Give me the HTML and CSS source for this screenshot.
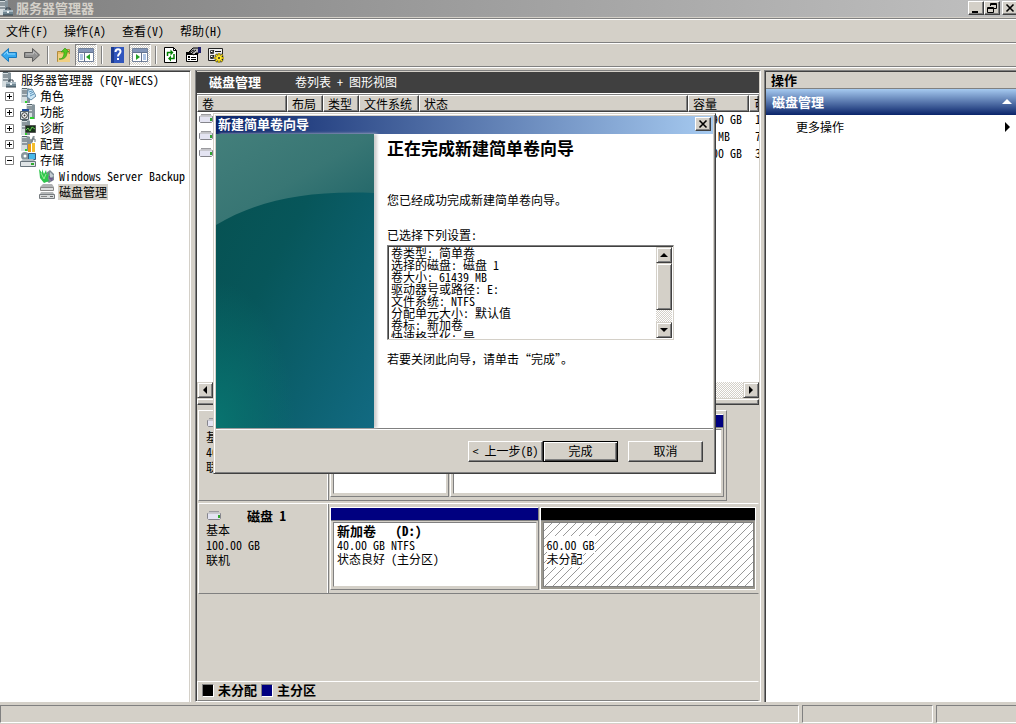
FILE: index.html
```html
<!DOCTYPE html>
<html lang="zh-CN">
<head>
<meta charset="utf-8">
<title>服务器管理器</title>
<link rel="stylesheet" href="styles.css">
</head>
<body>
<svg class="defs" aria-hidden="true">
  <symbol id="server" viewBox="0 0 16 16">
    <path d="M1 1l2-1h6l1 1v14H1z" fill="#a9b4ba"/><path d="M1 1h6v14H1z" fill="#d5dde0"/><path d="M7 1h3v14H7z" fill="#84939b"/>
    <path d="M2 3h5M2 5h5M2 8h5" stroke="#46555e"/><path d="M2 0h5v1H2z" fill="#53636b"/><path d="M5 13h2v2H5z" fill="#2fd12f"/>
  </symbol>
  <symbol id="toolbox" viewBox="0 0 16 16">
    <use href="#server" width="16" height="16"/><path d="M8 10V8h4v2" fill="none" stroke="#34434f"/><path d="M5 10h10v5H5z" fill="#718793"/><path d="M5 10h10v2H5z" fill="#a9bac4"/><path d="M9 11h2v2H9z" fill="#eef4f7"/><path d="M5 15h10" stroke="#33414a"/>
  </symbol>
  <symbol id="drive" viewBox="0 0 16 10">
    <path d="M3 1h10l2 2H1z" fill="#c4c4c8"/><path d="M3 .5h10" stroke="#9a9a9e"/><path d="M1.500 2.500h13v5l-1 1h-11l-1-1z" fill="#e4e4f2" stroke="#85858c"/><path d="M2 2.500h12" stroke="#c9c9cf"/><path d="M12 4h2v3h-2z" fill="#2fa62f"/>
  </symbol>
</svg>
<div class="app">
  <header class="titlebar">
    <svg class="i16 title-icon"><use href="#toolbox"/></svg>
    <h1 class="window-title">服务器管理器</h1>
    <div class="window-buttons">
      <button class="caption" aria-label="最小化"><svg class="i10" viewBox="0 0 10 10"><path d="M1 8h6v2H1z"/></svg></button>
      <button class="caption" aria-label="还原"><svg class="i10" viewBox="0 0 10 10"><path fill="none" stroke="#000" d="M3.500 3V.5h6v5H7M3 1.500h7M.5 4.500h6v5h-6zM0 5.500h7"/></svg></button>
      <button class="caption caption-close" aria-label="关闭"><svg class="i10" viewBox="0 0 10 10"><path fill="none" stroke="#000" stroke-width="1.600" d="M1.500 1.500l7 7M8.500 1.500l-7 7"/></svg></button>
    </div>
  </header>
  <nav class="menubar">
    <button class="menu">文件(F)</button><button class="menu">操作(A)</button><button class="menu">查看(V)</button><button class="menu">帮助(H)</button>
  </nav>
  <div class="toolbar">
    <button class="tool" aria-label="后退"><svg class="i16" viewBox="0 0 16 16"><path d="M.5 8l7-6.500v4h8v5h-8v4z" fill="#35a8ef" stroke="#1979bd"/><path d="M3 7.500l3.500-3V7H14" fill="none" stroke="#91d8ff"/></svg></button>
    <button class="tool" aria-label="前进"><svg class="i16" viewBox="0 0 16 16"><path d="M15.500 8l-7-6.500v4h-8v5h8v4z" fill="#929292" stroke="#5e5e5e"/><path d="M2 7h7.500V4.500l3.500 3" fill="none" stroke="#bdbdbd"/></svg></button>
    <span class="sep"></span>
    <button class="tool" aria-label="向上"><svg class="i16" viewBox="0 0 16 16"><path d="M1.500 4.500h6l1-2h5v12h-12z" fill="#e8bd61" stroke="#b18a3c"/><path d="M2 7h12v8H2z" fill="#f0cf82"/><path d="M3 12c4 0 5-3 5-7H5l4-4 4 4h-2c0 5-3 8-8 7z" fill="#54c71e" stroke="#2d8d10" stroke-width=".6"/></svg></button>
    <button class="tool pressed" aria-label="控制台树"><svg class="i16" viewBox="0 0 16 16"><path d="M.5 1.500h15v13H.5z" fill="#fff" stroke="#73829c"/><path d="M1 2h14v3H1z" fill="#8295b7"/><path d="M1 5.500h14M6.500 6v9" stroke="#65738f"/><path d="M2 8h3M2 10h3M2 12h3" stroke="#628ccb"/><path d="M12 7v6L8 10z" fill="#25a125"/></svg></button>
    <span class="sep"></span>
    <button class="tool" aria-label="帮助"><svg class="i16" viewBox="0 0 16 16"><path d="M1 0h13v16H1z" fill="#3156bd"/><path d="M1 0h3v16H1z" fill="#1d3c91"/><path d="M5.500 5c0-4 5-3.500 5-.5 0 2.500-2.500 2-2.500 5" fill="none" stroke="#fff" stroke-width="2"/><path d="M7 11h2v2H7z" fill="#fff"/></svg></button>
    <button class="tool pressed" aria-label="操作窗格"><svg class="i16" viewBox="0 0 16 16"><path d="M.5 1.500h15v13H.5z" fill="#fff" stroke="#73829c"/><path d="M1 2h14v3H1z" fill="#8295b7"/><path d="M1 5.500h14M9.500 6v9" stroke="#65738f"/><path d="M11 8h3M11 10h3M11 12h3" stroke="#628ccb"/><path d="M4 7v6l4-3z" fill="#25a125"/></svg></button>
    <span class="sep"></span>
    <button class="tool" aria-label="刷新"><svg class="i16" viewBox="0 0 16 16"><path d="M.5.5h9l3 3v12H.5z" fill="#fff" stroke="#000"/><path d="M9.500.5v3h3" fill="none" stroke="#000"/><path d="M3.500 9V5.500H7M10 7v4.500H6.500" fill="none" stroke="#008000" stroke-width="1.500"/><path d="M6.500 2.500v6l3-3zM7 8.500v6l-3-3z" fill="#008000"/></svg></button>
    <button class="tool" aria-label="属性"><svg class="i16" viewBox="0 0 16 16"><path d="M.5 5.500h11v9H.5z" fill="#fff" stroke="#000"/><path d="M0 5h12v3H0zM2 9h2v2H2zM2 12h2v1H2zM5 10h5v1H5zM5 12h5v1H5z"/><path d="M3 5l4-4h6v5h-3L8 8z" fill="#b8b8b8" stroke="#000"/><path d="M4 5l4-2M6 6l4-3" stroke="#000"/><path d="M12 0h3v6h-3z" fill="#20206c"/></svg></button>
    <button class="tool" aria-label="设置"><svg class="i16" viewBox="0 0 16 16"><path d="M.5 1.500h14v12H.5z" fill="#eee" stroke="#222"/><path d="M2.500 3.500h3v3h-3zM2.500 8.500h3v3h-3z" fill="#fff" stroke="#444"/><path d="M7 4.500h6M3 5l1 1 2-3M3 10l1 1 2-3" fill="none" stroke="#111"/><path d="M11 6v10M6 11h10M7.500 7.500l7 7M14.500 7.500l-7 7" stroke="#222" stroke-width="2.500"/><path d="M11 6v10M6 11h10M7.500 7.500l7 7M14.500 7.500l-7 7" stroke="#f7dc18" stroke-width="1.400"/><circle cx="11" cy="11" r="2.800" fill="#ffe52e"/><circle cx="11" cy="11" r="1" fill="#222"/></svg></button>
  </div>

  <main class="workspace">
    <aside class="tree">
      <ul class="tree-list">
        <li class="node root"><svg class="i16"><use href="#toolbox"/></svg><span>服务器管理器 (FQY-WECS)</span></li>
        <li class="node"><button class="expander" aria-label="展开"><svg class="i9" viewBox="0 0 9 9"><path d="M.5.5h8v8h-8z" fill="#fff" stroke="#808080"/><path d="M2 4.500h5M4.500 2v5" stroke="#000"/></svg></button><svg class="i16" viewBox="0 0 16 16"><use href="#server" width="16" height="16"/><path d="M8 2l4-1 4 7-5 4-4-3z" fill="#cde6f5" stroke="#628ba8"/><path d="M9 4l3-1M10 6l3-2M10 8l4-2" stroke="#5693bd"/></svg><span>角色</span></li>
        <li class="node"><button class="expander" aria-label="展开"><svg class="i9" viewBox="0 0 9 9"><path d="M.5.5h8v8h-8z" fill="#fff" stroke="#808080"/><path d="M2 4.500h5M4.500 2v5" stroke="#000"/></svg></button><svg class="i16" viewBox="0 0 16 16"><use href="#server" x="5" width="16" height="16"/><path d="M2 5h7v3H2z" fill="#254f9e"/><path d="M.5 7.500h8v8h-8z" fill="#dfe6e8" stroke="#53616b"/><circle cx="4.500" cy="11.500" r="2.800" fill="#fff" stroke="#333"/><circle cx="4.500" cy="11.500" r="1" fill="#333"/><path d="M12 13h2v2h-2z" fill="#2fd12f"/></svg><span>功能</span></li>
        <li class="node"><button class="expander" aria-label="展开"><svg class="i9" viewBox="0 0 9 9"><path d="M.5.5h8v8h-8z" fill="#fff" stroke="#808080"/><path d="M2 4.500h5M4.500 2v5" stroke="#000"/></svg></button><svg class="i16" viewBox="0 0 16 16"><use href="#server" width="16" height="16"/><path d="M5.500 5.500h10v7h-10z" fill="#18321b" stroke="#555"/><path d="M6 10l2-2 2 3 2-4 3 2" fill="none" stroke="#62c94e"/></svg><span>诊断</span></li>
        <li class="node"><button class="expander" aria-label="展开"><svg class="i9" viewBox="0 0 9 9"><path d="M.5.5h8v8h-8z" fill="#fff" stroke="#808080"/><path d="M2 4.500h5M4.500 2v5" stroke="#000"/></svg></button><svg class="i16" viewBox="0 0 16 16"><use href="#server" width="16" height="16"/><path d="M7 1l3 3v4M14 0l-3 7" fill="none" stroke="#8b969b" stroke-width="2"/><path d="M8 8h3v8H8z" fill="#ec9c12"/><path d="M13.500 7v9" stroke="#f4bd2d" stroke-width="3"/><path d="M12 6V3h3v3" fill="none" stroke="#68747a"/></svg><span>配置</span></li>
        <li class="node"><button class="expander" aria-label="折叠"><svg class="i9" viewBox="0 0 9 9"><path d="M.5.5h8v8h-8z" fill="#fff" stroke="#808080"/><path d="M2 4.500h5" stroke="#000"/></svg></button><svg class="i16" viewBox="0 0 16 16"><circle cx="5" cy="4" r="4" fill="#89969e"/><circle cx="5" cy="4" r="1.500" fill="#fff"/><path d="M8.500 1.500h7v6h-7z" fill="#4ab9e8" stroke="#375d82"/><path d="M1 9l2-2h10l2 2z" fill="#b3bdc2"/><path d="M.5 9.500h15v5H.5z" fill="#dfe4e6" stroke="#68747c"/><path d="M11 11h3v2h-3z" fill="#2fad2f"/></svg><span>存储</span></li>
        <li class="node leaf"><svg class="i16" viewBox="0 0 16 16"><path d="M7 5l4-3 4 4v6l-5 3-5-4z" fill="#7e8992"/><path d="M11 4l4 4-4 2z" fill="#c2cbd1"/><path d="M0 1l3 4V1l2 5 2-4 1 5 2-3-1 7 1 2-5 2-4-5z" fill="#2fc64c"/><path d="M2 5l3 6 2-5" fill="none" stroke="#96ed96"/><path d="M10 8l3 5M10 10l4 1" stroke="#6c4f8d"/></svg><span>Windows Server Backup</span></li>
        <li class="node leaf"><svg class="i16" viewBox="0 0 16 16"><path d="M4 0h9l2 3-1 3H3L1 3z" fill="#b0b2b3"/><path d="M1.500 3.500h13v3h-13z" fill="#dedfdf" stroke="#888"/><path d="M2 8h12l1 2H1z" fill="#b4b7b8"/><path d="M.5 10.500h15v4H.5z" fill="#d9dcdd" stroke="#777c80"/><path d="M2 12.500h6" stroke="#888"/><path d="M11 12h3v1h-3z" fill="#686868"/></svg><span class="selected">磁盘管理</span></li>
      </ul>
    </aside>

    <section class="center">
      <div class="view-header"><h2 class="strong">磁盘管理</h2><span>卷列表 + 图形视图</span></div>
      <div class="volume-list">
        <table class="volumes">
          <colgroup><col class="c-name"><col class="c-short"><col class="c-short"><col class="c-fs"><col><col class="c-size"><col class="c-free"></colgroup>
          <thead><tr><th>卷</th><th>布局</th><th>类型</th><th>文件系统</th><th>状态</th><th>容量</th><th>可</th></tr></thead>
          <tbody>
            <tr><td class="drive-cell"><svg class="drive"><use href="#drive"/></svg></td><td></td><td></td><td></td><td></td><td>39.90 GB</td><td>1</td></tr>
            <tr><td class="drive-cell"><svg class="drive"><use href="#drive"/></svg></td><td></td><td></td><td></td><td></td><td>100 MB</td><td>7</td></tr>
            <tr><td class="drive-cell"><svg class="drive"><use href="#drive"/></svg></td><td></td><td></td><td></td><td></td><td>40.00 GB</td><td>3</td></tr>
          </tbody>
        </table>
      </div>
      <div class="hscroll"><button class="scroll-btn" aria-label="向左滚动"><svg class="i8" viewBox="0 0 8 8"><path d="M6 0v8L2 4z"/></svg></button><button class="scroll-btn" aria-label="向右滚动"><svg class="i8" viewBox="0 0 8 8"><path d="M2 0v8l4-4z"/></svg></button></div>
      <div class="splitter"></div>
      <div class="disks">
        <article class="disk disk-short">
          <div class="disk-label"><svg class="drive"><use href="#drive"/></svg><h3 class="strong">磁盘 0</h3><p class="disk-info">基本<br>40.00 GB<br>联机</p></div>
          <div class="regions">
            <div class="region region-small"><div class="bar primary"></div><div class="region-body"></div></div>
            <div class="region"><div class="bar primary"></div><div class="region-body"></div></div>
          </div>
        </article>
        <article class="disk">
          <div class="disk-label"><svg class="drive"><use href="#drive"/></svg><h3 class="strong">磁盘 1</h3><p class="disk-info">基本<br>100.00 GB<br>联机</p></div>
          <div class="regions">
            <div class="region region-left"><div class="bar primary"></div><div class="region-body"><h4 class="strong pre">新加卷   (D:)</h4><p>40.00 GB NTFS</p><p>状态良好 (主分区)</p></div></div>
            <div class="region region-free"><div class="bar free"></div><div class="region-body hatch"><p><span class="plate">60.00 GB</span></p><p><span class="plate">未分配</span></p></div></div>
          </div>
        </article>
      </div>
      <div class="legend"><span class="swatch free"></span><span class="strong">未分配</span><span class="swatch primary"></span><span class="strong">主分区</span></div>

      <div class="dialog" role="dialog" aria-labelledby="dlg-title">
        <div class="dialog-title"><h2 class="strong" id="dlg-title">新建简单卷向导</h2><button class="caption" aria-label="关闭"><svg class="i10" viewBox="0 0 10 10"><path fill="none" stroke="#000" stroke-width="1.600" d="M1.500 1.500l7 7M8.500 1.500l-7 7"/></svg></button></div>
        <div class="dialog-body">
          <svg class="banner" viewBox="0 0 158 294" preserveAspectRatio="none" aria-hidden="true">
            <defs>
              <linearGradient id="base" x1="0" y1="0" x2="1" y2="1"><stop offset="0" stop-color="#06504f"/><stop offset=".4" stop-color="#07565a"/><stop offset=".7" stop-color="#0c606e"/><stop offset="1" stop-color="#126a82"/></linearGradient>
              <linearGradient id="gloss" x1="0" y1="0" x2="1" y2="1"><stop offset="0" stop-color="#437f7b"/><stop offset=".5" stop-color="#387674"/><stop offset="1" stop-color="#1c6266"/></linearGradient>
              <radialGradient id="glow" cx="0" cy="1" r=".5"><stop offset="0" stop-color="#08746f"/><stop offset="1" stop-color="#08746f" stop-opacity="0"/></radialGradient>
            </defs>
            <path d="M0 0h158v294H0z" fill="url(#base)"/><path d="M0 0h158v294H0z" fill="url(#glow)"/><path d="M0 0h158v59C90 56 40 67 0 91z" fill="url(#gloss)"/>
          </svg>
          <div class="dialog-content">
            <h2 class="headline">正在完成新建简单卷向导</h2>
            <p class="done">您已经成功完成新建简单卷向导。</p>
            <label for="settings">已选择下列设置:</label>
            <div class="listbox">
              <textarea id="settings" class="settings" readonly>卷类型: 简单卷
选择的磁盘: 磁盘 1
卷大小: 61439 MB
驱动器号或路径: E:
文件系统: NTFS
分配单元大小: 默认值
卷标: 新加卷
快速格式化: 是</textarea>
              <div class="vscroll"><button class="scroll-btn" aria-label="向上滚动"><svg class="i8" viewBox="0 0 8 8"><path d="M0 6h8L4 2z"/></svg></button><div class="thumb"></div><button class="scroll-btn" aria-label="向下滚动"><svg class="i8" viewBox="0 0 8 8"><path d="M0 2h8L4 6z"/></svg></button></div>
            </div>
            <p class="hint">若要关闭此向导，请单击“完成”。</p>
          </div>
        </div>
        <div class="dialog-footer"><button class="btn">&lt; 上一步(B)</button><button class="btn default">完成</button><button class="btn cancel">取消</button></div>
      </div>
    </section>

    <aside class="actions">
      <h2 class="strong actions-head">操作</h2>
      <button class="strong actions-group"><span>磁盘管理</span><svg class="i10" viewBox="0 0 10 10"><path d="M0 7h10L5 2z" fill="#fff"/></svg></button>
      <button class="more"><span>更多操作</span><svg class="i10" viewBox="0 0 10 10"><path d="M3 0v10l5-5z"/></svg></button>
    </aside>
  </main>
  <footer class="statusbar"><span class="status"></span><span class="status status-mid"></span><span class="status status-end"></span></footer>
</div>
</body>
</html>
```
FILE: styles.css
```css
* { box-sizing: border-box; }
body {
  margin: 0;
  background: #d4d0c8;
  color: #000;
  font: 12px/16px "Noto Sans CJK SC", "Liberation Sans", sans-serif;
  font-feature-settings: "hwid";
}
h1, h2, h3, h4, p, ul { margin: 0; padding: 0; font-size: 12px; font-weight: normal; }
button, textarea {
  margin: 0; padding: 0; border: 0; border-radius: 0; background: none; color: inherit;
  font: inherit; font-feature-settings: inherit; text-align: left;
}
svg { display: block; flex: none; }
.defs { position: absolute; width: 0; height: 0; }
.strong { font-size: 13px; font-weight: bold; }
.pre { white-space: pre; }
.i16 { width: 16px; height: 16px; }
.i10 { width: 10px; height: 10px; }
.i9 { width: 9px; height: 9px; }
.i8 { width: 8px; height: 8px; }
.drive { width: 16px; height: 10px; }

.app { display: flex; flex-direction: column; height: 100vh; overflow: hidden; }
.titlebar { display: flex; height: 18px; flex: none; border-bottom: 1px solid #d4d0c8; background: linear-gradient(90deg, #808080, #c0c0c0); }
.title-icon { margin-left: -2px; }
.window-title { flex: 1; padding-left: 2px; color: #d4d0c8; font-size: 13px; font-weight: bold; }
.window-buttons { display: flex; padding-top: 1px; }
.caption { display: flex; align-items: center; justify-content: center; width: 16px; height: 14px; background: #d4d0c8; border: 1px solid; border-color: #fff #404040 #404040 #fff; box-shadow: inset -1px -1px #808080; }
.caption-close { margin-left: 2px; margin-right: -2px; }
.menubar, .toolbar { display: flex; align-items: center; flex: none; height: 24px; border-top: 1px solid #808080; box-shadow: inset 0 1px #fff; }
.menubar { gap: 16px; padding-left: 6px; }
.tool { display: flex; align-items: center; justify-content: center; width: 22px; height: 22px; }
.tool:first-child { width: 21px; padding-right: 3px; }
.pressed { border: 1px solid; border-color: #808080 #fff #fff #808080; background: repeating-conic-gradient(#fff 0 25%, #d4d0c8 0 50%) 0 0 / 2px 2px; }
.sep { width: 2px; height: 18px; margin: 0 4px; border-left: 1px solid #808080; border-right: 1px solid #fff; }

.workspace { display: flex; flex: 1; min-height: 0; padding: 3px 0; border-top: 1px solid #808080; box-shadow: inset 0 1px #fff; }
.tree { flex: none; width: 191px; margin-right: 4px; padding-right: 2px; background: #fff; border-top: 1px solid #808080; border-right: 1px solid #fff; box-shadow: inset 0 1px #404040, inset -1px 0 #d4d0c8; }
.tree-list { list-style: none; padding-top: 1px; }
.node { display: flex; align-items: center; height: 16px; padding-left: 5px; white-space: nowrap; }
.node > span { padding: 0 1px; margin-left: 3px; }
.root { padding-left: 1px; }
.leaf { padding-left: 39px; }
.expander { width: 9px; height: 9px; margin-right: 6px; }
.selected { background: #d4d0c8; }

.center { position: relative; display: flex; flex-direction: column; flex: 1; min-width: 0; padding: 1px 1px 0 1px; border: 1px solid; border-color: #808080 #fff #fff #808080; box-shadow: inset 1px 0 #404040; }
.view-header { display: flex; align-items: center; gap: 34px; flex: none; height: 22px; padding: 0 0 2px 12px; background: #404040; color: #fff; border-bottom: 1px solid #fff; }
.volume-list { flex: 1; min-height: 0; overflow: hidden; background: #fff; border-top: 1px solid #808080; }
.volumes { width: 100%; table-layout: fixed; border-collapse: separate; border-spacing: 0; line-height: 15px; }
.volumes th, .volumes td { height: 17px; padding: 0 0 0 6px; overflow: hidden; white-space: nowrap; text-align: left; font-weight: normal; }
.volumes td { padding-bottom: 3px; line-height: 14px; }
.volumes th { background: #d4d0c8; border: 1px solid; border-color: #fff #404040 #404040 #fff; box-shadow: inset -1px -1px #808080; padding-left: 4px; }
.volumes .drive-cell { padding-left: 1px; }
.c-name { width: 90px; }
.c-short { width: 36px; }
.c-fs { width: 60px; }
.c-size { width: 61px; }
.c-free { width: 10px; }
.hscroll, .vscroll { display: flex; justify-content: space-between; flex: none; background: repeating-conic-gradient(#fff 0 25%, #d4d0c8 0 50%) 0 0 / 2px 2px; }
.hscroll { height: 16px; }
.scroll-btn { display: flex; align-items: center; justify-content: center; flex: none; width: 16px; height: 16px; }
.scroll-btn, .thumb { background: #d4d0c8; border: 1px solid; border-color: #d4d0c8 #404040 #404040 #d4d0c8; box-shadow: inset 1px 1px #fff, inset -1px -1px #808080; }
.splitter { flex: none; height: 6px; margin-top: 1px; border: 1px solid; border-color: #fff #404040 #404040 #fff; box-shadow: inset -1px -1px #808080; }
.disks { display: flex; flex-direction: column; gap: 2px; flex: none; min-height: 276px; padding-top: 5px; }
.disk { display: flex; min-height: 91px; margin-left: 1px; border: 1px solid; border-color: #fff #d4d0c8 #808080 #fff; }
.disk-short { margin-right: 32px; border-right-color: #808080; }
.disk-label { display: grid; grid-template-columns: 41px 1fr; align-content: start; width: 129px; padding: 4px 0 0 7px; border-right: 1px solid #fff; }
.disk-label .drive { margin-top: 3px; }
.disk-info { grid-column: 1 / 3; line-height: 15px; margin-top: -2px; }
.regions { display: flex; flex: 1; min-width: 0; gap: 1px; padding: 3px 2px 3px 1px; border-left: 1px solid #808080; }
.region { display: flex; flex-direction: column; flex: 1; border: 1px solid; border-color: #fff #808080 #808080 #fff; }
.region-small { flex: none; width: 119px; }
.region-left { flex: 208; }
.region-free { flex: 216; }
.bar { height: 13px; border-bottom: 1px solid #808080; }
.primary { background: #000080; }
.free { background: #000; }
.region-body { flex: 1; margin: 1px 1px 2px 2px; padding: 1px 0 0 3px; background: #fff; border: 1px solid; border-color: #808080 #d4d0c8 #d4d0c8 #808080; line-height: 14px; }
.region-free { border-right-color: #fff; border-bottom-color: #fff; background: #9b988f; }
.hatch { padding-top: 15px; border-color: #808080; background: #fff linear-gradient(135deg, #fff 45%, #999 45% 55%, #fff 55%) 0 0 / 8px 8px; }
.plate { background: #fff; }
.legend { display: flex; align-items: center; gap: 4px; flex: none; height: 20px; padding: 0 0 2px 4px; border: 1px solid; border-color: #fff #d4d0c8 #808080 #fff; }
.swatch { width: 12px; height: 13px; border: 1px solid; border-color: #808080 #fff #fff #808080; }

.dialog { position: absolute; left: 17px; top: 42px; z-index: 1; width: 503px; padding: 2px; background: #d4d0c8; border: 1px solid; border-color: #d4d0c8 #404040 #404040 #d4d0c8; box-shadow: inset 1px 1px #fff, inset -1px -1px #808080; }
.dialog-title { display: flex; align-items: center; justify-content: space-between; height: 18px; padding: 0 2px 2px; color: #fff; background: linear-gradient(90deg, #0a246a, #a6caf0); }
.dialog-title .caption { color: #000; }
.dialog-body { display: flex; background: #fff; border-bottom: 1px solid #808080; }
.banner { width: 158px; height: 294px; box-shadow: 3px 0 3px #ccc; }
.dialog-content { flex: 1; padding: 3px 39px 0 13px; }
.headline { height: 55px; font-size: 17px; font-weight: bold; line-height: 21px; }
.done { height: 35px; }
.dialog-content label { display: block; height: 18px; }
.listbox { display: flex; height: 95px; margin-bottom: 11px; border: 1px solid; border-color: #808080 #d4d0c8 #d4d0c8 #808080; box-shadow: inset 1px 1px #404040; padding: 1px; }
.settings { flex: 1; min-width: 0; padding: 0 2px; resize: none; overflow: hidden; outline: 0; line-height: 12px; }
.vscroll { flex-direction: column; justify-content: flex-start; }
.thumb { height: 47px; margin-bottom: auto; }
.hint { font-feature-settings: normal; }
.dialog-footer { display: flex; height: 42px; padding: 11px 10px 0 0; justify-content: flex-end; border-top: 1px solid #fff; }
.btn { width: 75px; height: 21px; padding-bottom: 2px; text-align: center; white-space: nowrap; border: 1px solid; border-color: #fff #404040 #404040 #fff; box-shadow: inset -1px -1px #808080; }
.default { border-color: #000; box-shadow: inset 1px 1px #fff, inset -1px -1px #404040, inset -2px -2px #808080; }
.cancel { margin-left: 10px; }

.actions { flex: none; width: 252px; margin-left: 3px; padding: 1px 0 0 1px; background: #fff; border-top: 1px solid #808080; border-left: 1px solid #808080; box-shadow: inset 1px 1px #404040; }
.actions-head { height: 17px; padding-left: 5px; background: #d4d0c8; border-bottom: 1px solid #808080; line-height: 16px; }
.actions-group, .more { display: flex; align-items: center; justify-content: space-between; width: 100%; padding-right: 4px; }
.actions-group { height: 26px; padding-left: 6px; color: #fff; background: linear-gradient(#a6caf0, #0a246a); }
.more { height: 24px; padding-left: 30px; }
.statusbar { display: flex; gap: 3px; flex: none; height: 19px; padding-bottom: 1px; }
.status { flex: 1; border: 1px solid; border-color: #808080 #fff #fff #808080; }
.status-mid { flex: none; width: 131px; }
.status-end { flex: none; width: 80px; border-right: 0; }
```
